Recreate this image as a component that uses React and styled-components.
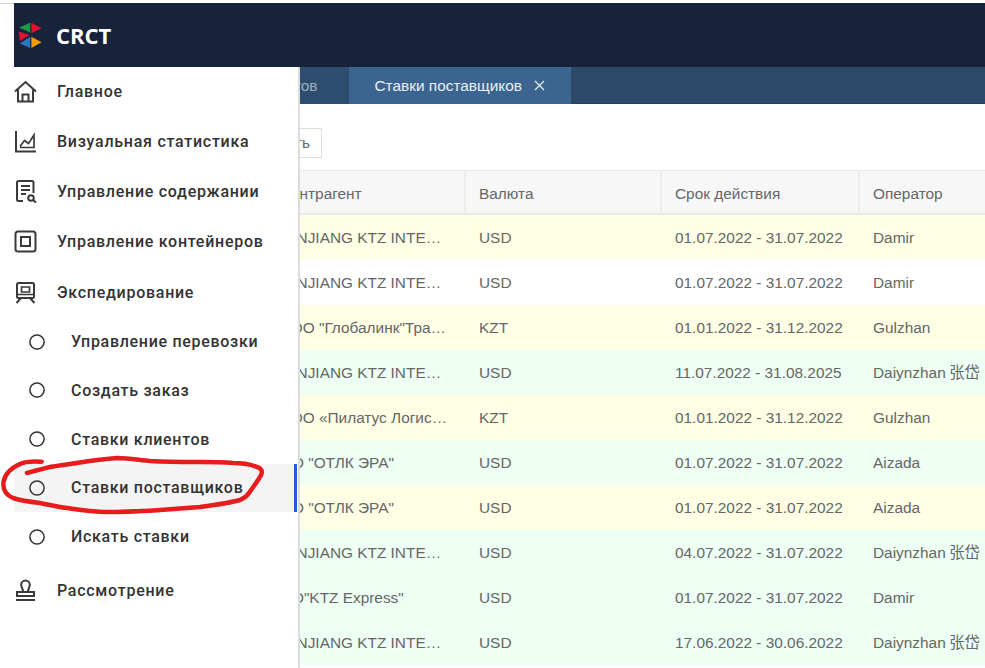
import React from 'react'
import styled, { createGlobalStyle } from 'styled-components'

const GlobalStyle = createGlobalStyle`
  html, body {
    margin: 0;
    padding: 0;
    background: #fff;
    overflow: hidden;
  }
  * {
    box-sizing: border-box;
  }
`

const Page = styled.div`
  position: relative;
  width: 985px;
  height: 668px;
  overflow: hidden;
  padding-top: 3px;
  padding-left: 14px;
  font-family: "Liberation Sans", Arial, sans-serif;
`
const TopEdge = styled.div`
  position: absolute;
  top: 3px;
  left: 0;
  right: 0;
  height: 1px;
  background: #d4d4d4;
`
const Header = styled.header`
  position: relative;
  z-index: 3;
  display: flex;
  align-items: center;
  gap: 14px;
  height: 64px;
  padding-left: 4px;
  background: #17233a;
`
const Brand = styled.span`
  color: #fff;
  font-family: "Open Sans", sans-serif;
  font-weight: 700;
  font-size: 22px;
`
const TabBar = styled.nav`
  display: flex;
  height: 37px;
  padding-left: 158px;
  background: #2c4968;
  border-bottom: 1px solid #27405c;
`
const Tab = styled.div`
  display: flex;
  align-items: center;
  gap: 12px;
  height: 37px;
  padding: 0 26px;
  padding-right: ${p => (p.$active ? '26px' : '31px')};
  color: ${p => (p.$active ? '#e9eff5' : '#9fb0c2')};
  background: ${p => (p.$active ? '#3c6490' : '#2f4d6e')};
  font-size: 15.4px;
  white-space: nowrap;
`
const Toolbar = styled.div`
  display: flex;
  padding: 24px 0 12px 216px;
`
const Button = styled.button`
  height: 30px;
  padding: 0 11px;
  background: #fff;
  border: 1px solid #ddd;
  color: #666;
  font-family: inherit;
  font-size: 15.4px;
`
const Row = styled.div`
  display: grid;
  grid-template-columns: 255px 197px 196px 198px 1fr;
  height: 45px;
  align-items: center;
  background: ${p => ({ yellow: '#feffe5', green: '#eefff4', white: '#fff' }[p.$tone])};
  color: #666;
  font-size: 15.4px;
`
const HeadRow = styled(Row)`
  background: #f7f7f7;
  border-top: 1px solid #e9e9e9;
  border-bottom: 2px solid #e9e9e9;
`
const Cell = styled.div`
  padding: 0 0 0 13px;
  white-space: nowrap;
  overflow: hidden;
`
const PartnerCell = styled(Cell)`
  padding-right: 18px;
  text-overflow: ellipsis;
`
const HeadCell = styled(Cell)`
  height: 100%;
  line-height: 46px;
  border-right: 2px solid #ececec;
  &:last-child {
    border-right: 0;
  }
`
const Cjk = styled.span`
  font-family: "Noto Sans CJK SC", sans-serif;
  font-size: 15.4px;
  line-height: 1;
`
const Sidebar = styled.aside`
  position: absolute;
  z-index: 2;
  top: 66px;
  left: 0;
  bottom: 0;
  width: 300px;
  padding-left: 14px;
  background: #fff;
  border-right: 2px solid #dcdcdc;
  font-family: Roboto, sans-serif;
`
const NavItem = styled.div`
  display: flex;
  align-items: center;
  height: 50.25px;
  margin-top: ${p => (p.$gap ? '4px' : 0)};
  color: #333;
  font-size: 16px;
  font-weight: 500;
  letter-spacing: 0.73px;
`
const IconSlot = styled.span`
  display: flex;
  justify-content: center;
  width: 23px;
  margin-right: 20px;
`
const SubItem = styled.div`
  display: flex;
  align-items: center;
  gap: 26px;
  height: 48.75px;
  margin-right: 1px;
  padding-left: 15px;
  color: #333;
  font-size: 16px;
  font-weight: 500;
  letter-spacing: 0.7px;
  background: ${p => (p.$active ? '#f4f4f4' : 'transparent')};
  border-right: 3px solid ${p => (p.$active ? '#1f5fd8' : 'transparent')};
`
const Scribble = styled.svg`
  position: absolute;
  z-index: 4;
  top: 0;
  left: 0;
  pointer-events: none;
`

const Logo = () => (
  <svg width="24" height="27" viewBox="18 22 24 27">
    <polygon points="19,27.6 30.2,22.8 30.2,32.6" fill="#1e9a45" />
    <polygon points="31.4,22.8 41.6,28.2 31.4,33.2" fill="#e0102f" />
    <polygon points="18.8,31.4 29.6,35 19.8,41" fill="#e0102f" />
    <polygon points="19.8,43.4 30.2,36.8 30.2,48" fill="#2a74c4" />
    <polygon points="31.4,36.8 41.6,42.3 31.4,48" fill="#f09a0c" />
  </svg>
)

const Ico = ({ children }) => (
  <svg width="23" height="23" viewBox="0 0 23 23" fill="none" stroke="#3a3a3a" strokeWidth="2">
    {children}
  </svg>
)

const RingIcon = () => (
  <svg width="16" height="16" viewBox="0 0 16 16" fill="none" stroke="#333" strokeWidth="1.5">
    <circle cx="8" cy="8" r="7.1" />
  </svg>
)
const HomeIcon = () => (
  <Ico>
    <path d="M1 11.5 11.5 2 22 11.5" />
    <path d="M4 9.5V21.5H19V9.5" />
    <path d="M8.5 21.5V14.5H14.5V21.5" />
  </Ico>
)
const ChartIcon = () => (
  <Ico>
    <path d="M2 1V21.5H22" />
    <path d="M6 16.5 10.5 10.5 14.5 13.5 20 5V17.5H6" strokeWidth="1.7" />
  </Ico>
)
const DocIcon = () => (
  <Ico>
    <path d="M9 21H4.5A1.5 1.5 0 0 1 3 19.5V2.5A1.5 1.5 0 0 1 4.5 1H18A1.5 1.5 0 0 1 19.5 2.5V13" />
    <path d="M7 6H16M7 10H16M7 14H12" />
    <circle cx="17" cy="18" r="2.8" />
    <path d="M19 20 22 22.5" />
  </Ico>
)
const ContainerIcon = () => (
  <Ico>
    <rect x="1.5" y="1.5" width="20" height="20" rx="2.5" />
    <rect x="7" y="7" width="9" height="9" />
  </Ico>
)
const TrainIcon = () => (
  <Ico>
    <rect x="3" y="2" width="17" height="15" rx="1.5" />
    <path d="M7.5 6H15.5V11H7.5ZM3 13.5H20" strokeWidth="1.7" />
    <path d="M7 17 2.5 22M16 17 20.5 22" />
  </Ico>
)
const StampIcon = () => (
  <Ico>
    <path d="M9 12.5C9 9.5 7.2 8.5 7.2 5.8A4.3 4.3 0 0 1 15.8 5.8C15.8 8.5 14 9.5 14 12.5" />
    <path d="M3 17V13H20V17Z" />
    <path d="M2 21H21" />
  </Ico>
)

const rows = [
  ['yellow', 'XINJIANG KTZ INTERNATIONAL', 'USD', '01.07.2022 - 31.07.2022', 'Damir'],
  ['white', 'XINJIANG KTZ INTERNATIONAL', 'USD', '01.07.2022 - 31.07.2022', 'Damir'],
  ['yellow', 'ТОО "Глобалинк"Транслогистик', 'KZT', '01.01.2022 - 31.12.2022', 'Gulzhan'],
  ['green', 'XINJIANG KTZ INTERNATIONAL', 'USD', '11.07.2022 - 31.08.2025', 'Daiynzhan', '张岱'],
  ['yellow', 'ТОО «Пилатус Логистик»', 'KZT', '01.01.2022 - 31.12.2022', 'Gulzhan'],
  ['green', 'АО "ОТЛК ЭРА"', 'USD', '01.07.2022 - 31.07.2022', 'Aizada'],
  ['yellow', 'АО "ОТЛК ЭРА"', 'USD', '01.07.2022 - 31.07.2022', 'Aizada'],
  ['green', 'XINJIANG KTZ INTERNATIONAL', 'USD', '04.07.2022 - 31.07.2022', 'Daiynzhan', '张岱'],
  ['green', 'АО"KTZ Express"', 'USD', '01.07.2022 - 31.07.2022', 'Damir'],
  ['green', 'XINJIANG KTZ INTERNATIONAL', 'USD', '17.06.2022 - 30.06.2022', 'Daiynzhan', '张岱'],
]

const subItems = ['Управление перевозки', 'Создать заказ', 'Ставки клиентов', 'Ставки поставщиков', 'Искать ставки']

export default function App() {
  return (
    <Page>
      <GlobalStyle />
      <TopEdge />
      <Header>
        <Logo />
        <Brand>CRCT</Brand>
      </Header>
      <TabBar>
        <Tab>Ставки клиентов</Tab>
        <Tab $active>
          Ставки поставщиков
          <svg width="11" height="11" viewBox="0 0 11 11" stroke="#e9eff5" strokeWidth="1.2">
            <path d="M1 1 10 10M10 1 1 10" />
          </svg>
        </Tab>
      </TabBar>
      <Toolbar>
        <Button>Добавить</Button>
      </Toolbar>
      <HeadRow>
        <HeadCell />
        <HeadCell>Контрагент</HeadCell>
        <HeadCell>Валюта</HeadCell>
        <HeadCell>Срок действия</HeadCell>
        <HeadCell>Оператор</HeadCell>
      </HeadRow>
      {rows.map(([tone, partner, currency, period, operator, cjk], i) => (
        <Row key={i} $tone={tone}>
          <Cell />
          <PartnerCell>{partner}</PartnerCell>
          <Cell>{currency}</Cell>
          <Cell>{period}</Cell>
          <Cell>
            {operator}
            {cjk && <Cjk> {cjk}</Cjk>}
          </Cell>
        </Row>
      ))}

      <Sidebar>
        <NavItem><IconSlot><HomeIcon /></IconSlot>Главное</NavItem>
        <NavItem><IconSlot><ChartIcon /></IconSlot>Визуальная статистика</NavItem>
        <NavItem><IconSlot><DocIcon /></IconSlot>Управление содержании</NavItem>
        <NavItem><IconSlot><ContainerIcon /></IconSlot>Управление контейнеров</NavItem>
        <NavItem><IconSlot><TrainIcon /></IconSlot>Экспедирование</NavItem>
        {subItems.map((label, i) => (
          <SubItem key={label} $active={i === 3}><RingIcon />{label}</SubItem>
        ))}
        <NavItem $gap><IconSlot><StampIcon /></IconSlot>Рассмотрение</NavItem>
      </Sidebar>

      <Scribble width="985" height="668" fill="none">
        <path
          d="M41.7 461.7C32 461 24 462 20 464C11 468 5 473 3.5 482C2.5 490 6 495 13 498C22 501 31 502 40 503C50 505 58 507 67 508C80 510 93 512 107 512C125 512 142 511 160 510C175 509 188 508 200 507C215 505 230 503 240 500C245 498 247 496 249 493C253 487 258 481 261 475C263 471 261 468 257 467C250 464 242 463 233 463C222 462 211 462 200 462C183 462 167 462 150 461C139 460 128 458 117 458C106 459 95 460 83 462C72 464 61 465 50 467C42 469 34 471 27 473"
          stroke="#e81c1c"
          strokeWidth="4.5"
          strokeLinecap="round"
        />
      </Scribble>
    </Page>
  )
}
